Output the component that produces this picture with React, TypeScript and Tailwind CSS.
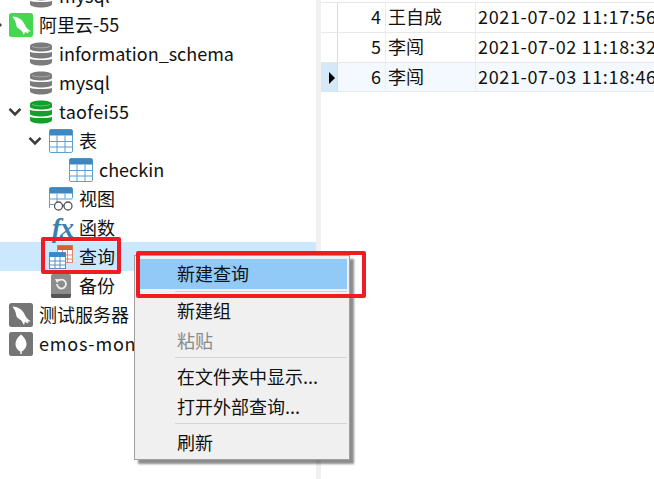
import React from "react";

const font = { fontFamily: '"Noto Sans CJK SC", sans-serif' };

function Db({ color }: { color: string }) {
  return (
    <svg width="24" height="24" viewBox="0 0 24 24">
      <g fill={color}>
        <path d="M1 4C1 1.800 6 .5 12 .5S23 1.800 23 4v3c0 1.300-5 2.500-11 2.500S1 8.300 1 7z" />
        <path d="M1 9.800C3 11 7 11 12 11s9 0 11-1.200v4.200c0 1.300-5 2.500-11 2.500S1 15.300 1 14z" />
        <path d="M1 16.800C3 18 7 18 12 18s9 0 11-1.200V20c0 2-5 3.500-11 3.500S1 22 1 20z" />
      </g>
      <path d="M3 4.300C5 5.500 8 5.800 12 5.800s7-.3 9-1.500" stroke="#fff" strokeOpacity="0.35" fill="none" />
    </svg>
  );
}

function Dolphin({ bg }: { bg: string }) {
  return (
    <svg width="24" height="24" viewBox="0 0 24 24">
      <rect width="24" height="24" rx="2.500" fill={bg} />
      <path
        d="M3.500 3.500c3 .2 6 1 8.500 3 2.500 2 3.500 5 5 7.500.9 1.500 2.500 2.800 4 3.700.5.300.5.800-.1.800h-2.400l1 1.800c-1.200 0-2.600-.6-3.600-1.500-.2 1.200-.4 2.300-1 3.300-1-1.800-1.500-3.500-3-5-1.300-1.200-3-1.600-4-3.200-.8-1.300-.7-3-1.300-4.500C5.900 6.700 4.500 5.500 3.500 3.500z"
        fill="#fff"
      />
    </svg>
  );
}

function Leaf() {
  return (
    <svg width="24" height="24" viewBox="0 0 24 24">
      <rect width="24" height="24" rx="2.500" fill="#757575" />
      <path d="M12 2.500c3.500 3 5.500 6 5.500 9.500S15 18.500 12.700 19.500V22h-1.400v-2.500C9 18.500 6.500 15.500 6.500 12S8.500 5.500 12 2.500z" fill="#fff" />
    </svg>
  );
}

function Table({ head = "#3f87bd", line = "#5b9fd3" }: { head?: string; line?: string }) {
  return (
    <svg width="24" height="24" viewBox="0 0 24 24">
      <rect x="0.500" y="0.500" width="23" height="23" rx="1.500" fill="#fff" stroke={line} />
      <path d="M2 0.500h20a1.500 1.500 0 0 1 1.500 1.500v4.500H.5V2A1.500 1.500 0 0 1 2 .5z" fill={head} />
      <path d="M.5 12.500h23M.5 18h23M8 6.500v17M16 6.500v17" stroke={line} strokeWidth="1" fill="none" />
    </svg>
  );
}

function ViewIcon() {
  return (
    <svg width="24" height="24" viewBox="0 0 24 24">
      <path d="M.5 21V2A1.500 1.500 0 0 1 2 .5h20A1.500 1.500 0 0 1 23.500 2v9" fill="#fff" stroke="#5b9fd3" />
      <path d="M2 .5h20A1.500 1.500 0 0 1 23.500 2v4.500H.5V2A1.500 1.500 0 0 1 2 .5z" fill="#3f87bd" />
      <path d="M.5 12h23M.5 17.500h5M8 6.500v9M16 6.500v5" stroke="#5b9fd3" fill="none" />
      <circle cx="9.500" cy="19" r="4" fill="#fff" stroke="#555" strokeWidth="1.300" />
      <circle cx="19" cy="19" r="4" fill="#fff" stroke="#555" strokeWidth="1.300" />
      <path d="M13.500 18.500h1.500" stroke="#555" strokeWidth="1.300" />
    </svg>
  );
}

function FxIcon() {
  return (
    <span
      className="flex w-6 h-6 items-center justify-end text-[#3a7fb0] italic font-bold text-[28px] leading-none"
      style={{ fontFamily: '"Liberation Serif", serif' }}
    >
      <span className="tracking-[-1px] mt-[1px]">fx</span>
    </span>
  );
}

function QueryIcon() {
  return (
    <svg width="24" height="24" viewBox="0 0 24 24">
      <rect x="8.500" y="0.500" width="15" height="17" fill="#fff" stroke="#e0876a" />
      <path d="M8.500.5h15v4.500h-15z" fill="#d2603f" />
      <path d="M8.500 10h15M8.500 14h15M13.500 5v13M18.500 5v13" stroke="#e0876a" fill="none" />
      <rect x="0.500" y="7.500" width="16" height="16" fill="#fff" stroke="#4f94cc" />
      <path d="M.5 7.500h16v4.500H.5z" fill="#3f87bd" />
      <path d="M.5 16h16M.5 20h16M6 12v12M11 12v12" stroke="#4f94cc" fill="none" />
    </svg>
  );
}

function BackupIcon() {
  return (
    <svg width="24" height="24" viewBox="0 0 24 24">
      <path d="M4 0h16a2 2 0 0 1 2 2v20a2 2 0 0 1-2 2H4a2 2 0 0 1-2-2V2a2 2 0 0 1 2-2z" fill="#8c8c8c" />
      <path d="M2 20h20v2a2 2 0 0 1-2 2H4a2 2 0 0 1-2-2z" fill="#555" />
      <path d="M8 10a4.500 4.500 0 1 0 1.600-3.400" stroke="#eee" strokeWidth="1.800" fill="none" />
      <path d="M6 5l5.500.3-3.500 3.700z" fill="#eee" />
    </svg>
  );
}

function Chevron() {
  return (
    <svg width="14" height="10" viewBox="0 0 14 10" className="-ml-px">
      <path d="M1.500 1.800L7 7.300l5.500-5.500" fill="none" stroke="#3c3c3c" strokeWidth="2.600" />
    </svg>
  );
}

function ChevronRight() {
  return (
    <svg width="13" height="14" viewBox="0 0 13 14">
      <path d="M7 2l5 5-5 5" fill="none" stroke="#3c3c3c" strokeWidth="1.500" />
    </svg>
  );
}

const indents = ["-ml-[11px]", "ml-[9px]", "ml-[29px]", "ml-[49px]"];

function Row({
  depth,
  icon,
  label,
  caret,
  active,
  labelClass = "",
}: {
  depth: number;
  icon: React.ReactNode;
  label: string;
  caret?: "down" | "right";
  active?: boolean;
  labelClass?: string;
}) {
  return (
    <div className={`flex h-[29px] items-center text-[18px] text-[#111] whitespace-nowrap ${active ? "bg-[#cce8ff]" : ""}`}>
      <div className={`flex items-center ${indents[depth]}`}>
        <span className="flex w-5 justify-start">
          {caret === "down" && <Chevron />}
          {caret === "right" && <ChevronRight />}
        </span>
        <span className="flex w-6 h-6 shrink-0">{icon}</span>
        <span className={`ml-[6px] mb-[2px] leading-none ${labelClass}`}>{label}</span>
      </div>
    </div>
  );
}

function Sidebar() {
  return (
    <div className="w-[316px] shrink-0 overflow-hidden bg-white">
      <div className="-mt-[19px]">
        <Row depth={1} icon={<Db color="#7b7b7b" />} label="mysql" />
        <Row depth={0} caret="right" icon={<Dolphin bg="#43d84f" />} label="阿里云-55" />
        <Row depth={1} icon={<Db color="#7b7b7b" />} label="information_schema" />
        <Row depth={1} icon={<Db color="#7b7b7b" />} label="mysql" />
        <Row depth={1} caret="down" icon={<Db color="#12a02a" />} label="taofei55" labelClass="tracking-[0.3px]" />
        <Row depth={2} caret="down" icon={<Table />} label="表" />
        <Row depth={3} icon={<Table />} label="checkin" />
        <Row depth={2} icon={<ViewIcon />} label="视图" />
        <Row depth={2} icon={<FxIcon />} label="函数" />
        <Row depth={2} active icon={<QueryIcon />} label="查询" />
        <Row depth={2} icon={<BackupIcon />} label="备份" />
        <Row depth={0} icon={<Dolphin bg="#757575" />} label="测试服务器" />
        <Row depth={0} icon={<Leaf />} label="emos-mongodb" labelClass="tracking-[0.8px]" />
      </div>
    </div>
  );
}

const rows = [
  { id: "4", name: "王自成", time: "2021-07-02 11:17:56" },
  { id: "5", name: "李闯", time: "2021-07-02 11:18:32" },
  { id: "6", name: "李闯", time: "2021-07-03 11:18:46", selected: true },
];

function DataGrid() {
  return (
    <div className="flex-1 min-w-0 overflow-hidden bg-white pt-[2px] text-[18px] text-[#111]">
      {rows.map((r) => (
        <div
          key={r.id}
          className={`grid grid-cols-[17px_48px_90px_1fr] h-[30px] border-t border-[#e8e8e8] ${r.selected ? "bg-[#f3f9fe] border-b" : ""}`}
        >
          <div className={`flex items-center justify-start pl-[8px] border-r border-[#dcdcdc] ${r.selected ? "bg-[#d5e8f8]" : "bg-white"}`}>
            {r.selected && <span className="w-0 h-0 border-y-[6px] border-y-transparent border-l-[6px] border-l-black" />}
          </div>
          <div className="flex items-center justify-end pr-1 pb-[2px] border-r border-[#ececec]">{r.id}</div>
          <div className="flex items-center pl-[2px] pb-[2px] border-r border-[#ececec] whitespace-nowrap">{r.name}</div>
          <div className="flex items-center pl-[2px] pb-[2px] whitespace-nowrap tracking-[0.65px]">{r.time}</div>
        </div>
      ))}
    </div>
  );
}

function MenuItem({ label, disabled }: { label: string; disabled?: boolean }) {
  return (
    <div className={`h-[30px] flex items-center pl-[42px] pb-[2px] text-[18px] leading-none whitespace-nowrap ${disabled ? "text-[#8a8a8a]" : "text-[#111]"}`}>
      {label}
    </div>
  );
}

function Sep() {
  return <div className="ml-[40px] mr-[2px] h-px bg-[#d4d4d4]" />;
}

function ContextMenu() {
  return (
    <div className="absolute left-[134px] top-[255px] w-[216px] h-[205px] border border-[#a0a0a0] bg-[#f0f0f0] shadow-[4px_4px_2px_rgba(0,0,0,0.45)] pt-[3px] pl-[5px]">
      <div className="pr-[2px]">
        <div className="h-[30px] flex items-center bg-[#91c9f7] pl-[37px] pb-[2px] text-[18px] leading-none text-[#111]">新建查询</div>
      </div>
      <div className="-ml-[5px] mt-[2px]">
        <Sep />
        <div className="mt-[4px]">
          <MenuItem label="新建组" />
          <MenuItem label="粘贴" disabled />
        </div>
        <div className="mt-[1px]"><Sep /></div>
        <div className="mt-[4px]">
          <MenuItem label="在文件夹中显示..." />
          <MenuItem label="打开外部查询..." />
        </div>
        <div className="mt-[1px]"><Sep /></div>
        <div className="mt-[4px]">
          <MenuItem label="刷新" />
        </div>
      </div>
    </div>
  );
}

export default function App() {
  return (
    <div className="relative flex w-[654px] h-[479px] overflow-hidden bg-white" style={font}>
      <Sidebar />
      <div className="w-[5px] shrink-0 bg-[#f0f0f0]" />
      <DataGrid />
      <ContextMenu />
      <div className="absolute left-[41px] top-[237px] w-[80px] h-[37px] border-[4px] border-[#ee1c25] rounded-[2px]" />
      <div className="absolute left-[136px] top-[251px] w-[230px] h-[47px] border-[4px] border-[#ee1c25] rounded-[2px]" />
    </div>
  );
}
